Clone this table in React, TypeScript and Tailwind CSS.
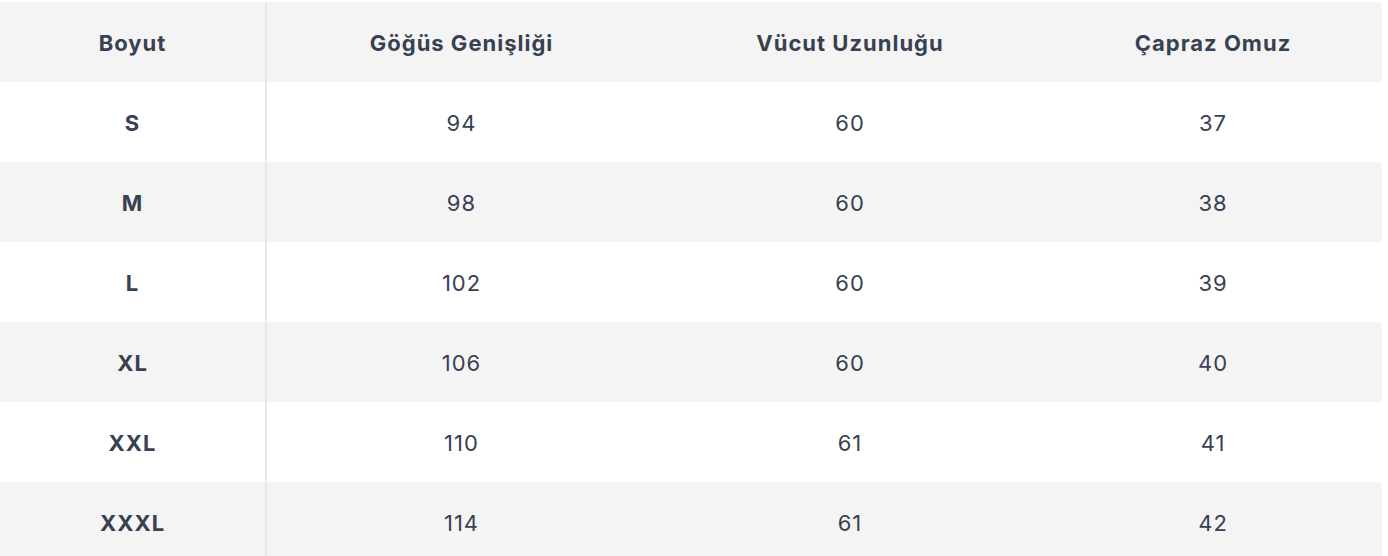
import React from "react";

interface SizeRow {
  size: string;
  chest: number;
  length: number;
  shoulder: number;
}

const ROWS: SizeRow[] = [
  { size: "S", chest: 94, length: 60, shoulder: 37 },
  { size: "M", chest: 98, length: 60, shoulder: 38 },
  { size: "L", chest: 102, length: 60, shoulder: 39 },
  { size: "XL", chest: 106, length: 60, shoulder: 40 },
  { size: "XXL", chest: 110, length: 61, shoulder: 41 },
  { size: "XXXL", chest: 114, length: 61, shoulder: 42 },
];

export default function App() {
  return (
    <div
      className="h-[556px] w-[1388px] overflow-hidden bg-white pt-[2px]"
      style={{ fontFamily: "Inter, 'Noto Sans', sans-serif" }}
    >
      <table className="w-[1382px] table-fixed border-collapse text-[22px] tracking-[1px] text-[#374151]">
        <colgroup>
          <col className="w-[266px]" />
          <col className="w-[390px]" />
          <col className="w-[388px]" />
          <col className="w-[338px]" />
        </colgroup>
        <thead>
          <tr className="h-[80px] bg-[#f4f4f4]">
            <th className="border-r-2 border-[#e8e8e8] pt-[2px] text-center font-bold">Boyut</th>
            <th className="pt-[2px] text-center font-bold">Göğüs Genişliği</th>
            <th className="pt-[2px] text-center font-bold">Vücut Uzunluğu</th>
            <th className="pt-[2px] text-center font-bold">Çapraz Omuz</th>
          </tr>
        </thead>
        <tbody>
          {ROWS.map((row, i) => (
            <tr key={row.size} className={`h-[80px] ${i % 2 === 1 ? "bg-[#f4f4f4]" : "bg-white"}`}>
              <td className="border-r-2 border-[#e8e8e8] pt-[2px] text-center font-bold">{row.size}</td>
              <td className="pt-[2px] text-center">{row.chest}</td>
              <td className="pt-[2px] text-center">{row.length}</td>
              <td className="pt-[2px] text-center">{row.shoulder}</td>
            </tr>
          ))}
        </tbody>
      </table>
    </div>
  );
}
